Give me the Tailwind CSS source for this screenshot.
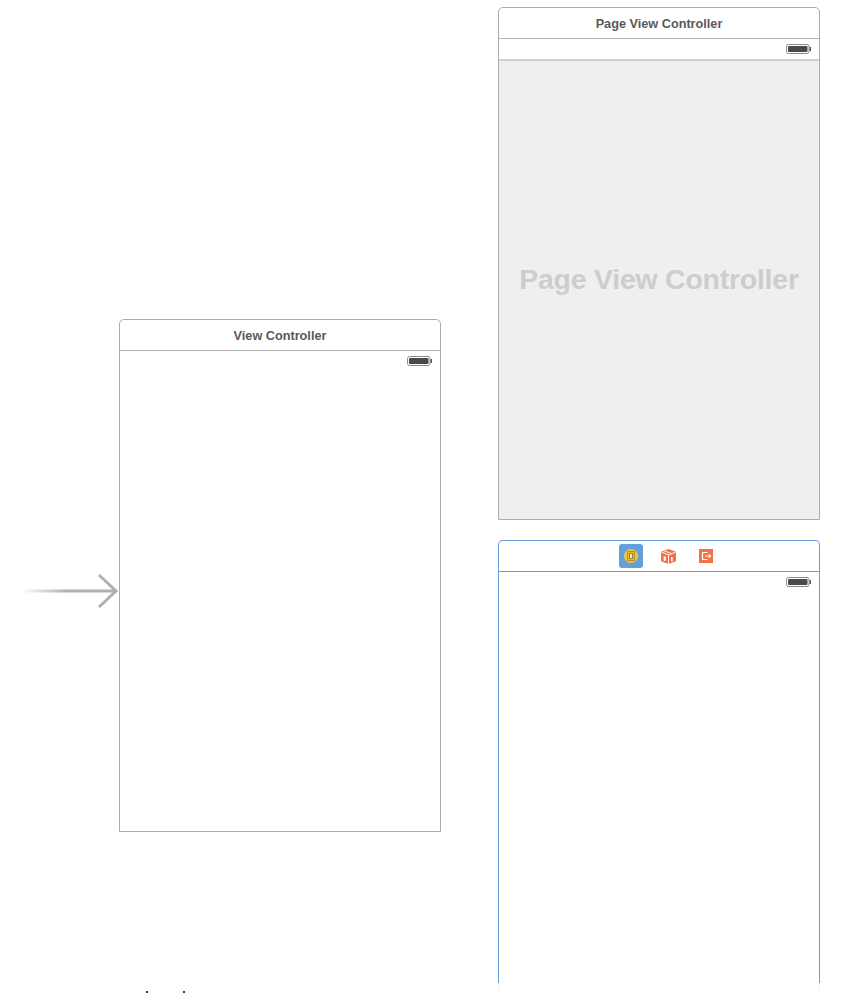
<!doctype html>
<html>
<head>
<meta charset="utf-8">
<script src="https://cdn.jsdelivr.net/npm/@tailwindcss/browser@4"></script>
</head>
<body class="bg-white">
<div class="relative w-[858px] h-[993px] overflow-hidden bg-white font-['Liberation_Sans',Arial,sans-serif]">

  <!-- Left scene -->
  <section class="absolute left-[119px] top-[319px] w-[322px] h-[513px] flex flex-col border border-[#ababab] rounded-t-[5px] bg-white">
    <header class="h-[31px] shrink-0 flex items-center justify-center pt-[3px] border-b border-[#b4b4b4] text-[12.7px] font-bold text-[#59595c]">View Controller</header>
    <div class="h-[20px] flex justify-end items-center pr-[8px]">
      <svg width="25" height="10" viewBox="0 0 25 10"><rect x="0.5" y="0.5" width="22.5" height="9" rx="2" fill="#fff" stroke="#8a8a8a"/><rect x="2" y="2" width="19.5" height="6" rx="1" fill="#4a4a4c"/><rect x="23.5" y="3" width="1.5" height="4" fill="#555"/></svg>
    </div>
  </section>

  <!-- Initial arrow -->
  <svg class="absolute left-[19px] top-[572px]" width="100" height="38" viewBox="0 0 100 38" fill="none">
    <defs><linearGradient id="g" x1="0" x2="1" y1="0" y2="0"><stop offset="0" stop-color="#b0b0b0" stop-opacity="0"/><stop offset="0.5" stop-color="#b0b0b0"/><stop offset="1" stop-color="#b0b0b0"/></linearGradient></defs>
    <rect x="2" y="17.5" width="94" height="3" fill="url(#g)"/>
    <path d="M80 3L97 19L80 35" stroke="#b0b0b0" stroke-width="3"/>
  </svg>

  <!-- Page View Controller scene -->
  <section class="absolute left-[498px] top-[7px] w-[322px] h-[513px] flex flex-col border border-[#ababab] rounded-t-[5px] bg-white">
    <header class="h-[31px] shrink-0 flex items-center justify-center pt-[3px] border-b border-[#b4b4b4] text-[12.7px] font-bold text-[#59595c]">Page View Controller</header>
    <div class="h-[22px] shrink-0 flex justify-end items-center pr-[8px] border-b-2 border-[#cfcfcf]">
      <svg width="25" height="10" viewBox="0 0 25 10"><rect x="0.5" y="0.5" width="22.5" height="9" rx="2" fill="#fff" stroke="#8a8a8a"/><rect x="2" y="2" width="19.5" height="6" rx="1" fill="#4a4a4c"/><rect x="23.5" y="3" width="1.5" height="4" fill="#555"/></svg>
    </div>
    <div class="flex-1 bg-[#efefef] flex items-center justify-center pb-[22px] text-[28.4px] font-bold text-[#cdcdcd] tracking-[-0.2px]">Page View Controller</div>
  </section>

  <!-- Selected scene -->
  <section class="absolute left-[498px] top-[540px] w-[322px] h-[443px] flex flex-col border border-b-0 border-[#659fdb] rounded-t-[5px] bg-white">
    <header class="h-[31px] shrink-0 flex items-center justify-start gap-[13px] border-b border-[#659fdb] pl-[120px]">
      <div class="w-[24px] h-[24px] rounded-[3px] bg-[#659fdb] flex items-center justify-center">
        <svg width="14" height="14" viewBox="0 0 14 14"><circle cx="7" cy="7" r="7" fill="#f4c63c"/><rect x="3.5" y="2.5" width="7" height="9" fill="#ecbb32" stroke="#b08f30"/><rect x="5.5" y="4.5" width="3" height="5" fill="#f7e9a8" stroke="#a08630"/></svg>
      </div>
      <div class="w-[24px] h-[24px] flex items-center justify-center">
        <svg width="15" height="15" viewBox="0 0 14 14"><path d="M7 0L14 2.5V11.5L7 14L0 11.5V2.5Z" fill="#f37048"/><path d="M0.5 3L7 5.5L13.5 3M7 5.5V14M3 1.6L9.5 4.3" stroke="#fff" stroke-width="0.9" fill="none"/><rect x="2.5" y="7" width="2" height="4" fill="#fff"/><rect x="9.5" y="7.5" width="1.4" height="4" fill="#fff"/></svg>
      </div>
      <div class="w-[24px] h-[24px] ml-[1px] flex items-center justify-center">
        <svg width="14" height="14" viewBox="0 0 14 14"><rect width="14" height="14" fill="#f37048"/><path d="M8.5 3.5H3.5V10.5H8.5" stroke="#fff" stroke-width="1.2" fill="none"/><path d="M6 7H11.5M9.8 5.2L11.6 7L9.8 8.8" stroke="#fff" stroke-width="1.1" fill="none"/></svg>
      </div>
    </header>
    <div class="h-[20px] flex justify-end items-center pr-[8px]">
      <svg width="25" height="10" viewBox="0 0 25 10"><rect x="0.5" y="0.5" width="22.5" height="9" rx="2" fill="#fff" stroke="#8a8a8a"/><rect x="2" y="2" width="19.5" height="6" rx="1" fill="#4a4a4c"/><rect x="23.5" y="3" width="1.5" height="4" fill="#555"/></svg>
    </div>
  </section>
  <div class="absolute left-[498px] top-[983px] w-[322px] h-[10px] border-x border-[#f3f3f3]"></div>

  <!-- Cropped text tips at the bottom -->
  <div class="absolute left-[146px] top-[991px] w-[2px] h-[2px] bg-[#3a3a3a]"></div>
  <div class="absolute left-[183px] top-[991px] w-[2px] h-[2px] bg-[#3a3a3a]"></div>
</div>
</body>
</html>
